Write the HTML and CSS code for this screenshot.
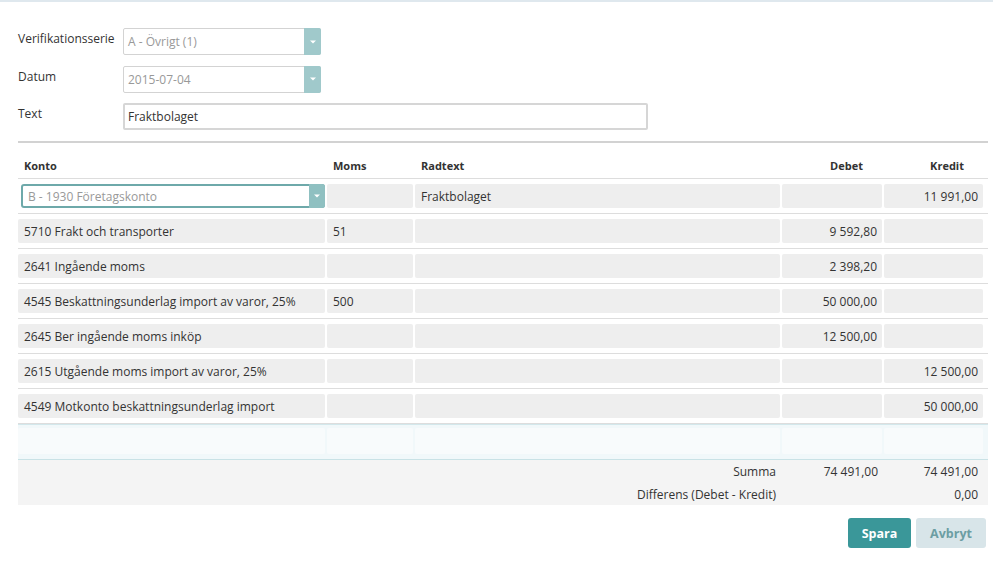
FILE: index.html
```html
<!DOCTYPE html>
<html lang="sv">
<head>
<meta charset="utf-8">
<title>Verifikation</title>
<link rel="stylesheet" href="styles.css">
</head>
<body>
<div class="topline"></div>
<div class="page">
  <div class="form">
    <div class="frow">
      <label class="flabel">Verifikationsserie</label>
      <div class="select"><span class="sval">A - Övrigt (1)</span><span class="sbtn"><svg width="6" height="4" viewBox="0 0 6 4"><path d="M0 0.5 L6 0.5 L3 3.5 Z" fill="#fff"/></svg></span></div>
    </div>
    <div class="frow">
      <label class="flabel">Datum</label>
      <div class="select"><span class="sval">2015-07-04</span><span class="sbtn"><svg width="6" height="4" viewBox="0 0 6 4"><path d="M0 0.5 L6 0.5 L3 3.5 Z" fill="#fff"/></svg></span></div>
    </div>
    <div class="frow">
      <label class="flabel">Text</label>
      <div class="tinput">Fraktbolaget</div>
    </div>
  </div>
  <div class="rule"></div>

  <div class="table">
    <div class="thead">
      <div class="th">Konto</div>
      <div class="th">Moms</div>
      <div class="th">Radtext</div>
      <div class="th num">Debet</div>
      <div class="th num">Kredit</div>
    </div>
    <div class="tr">
      <div class="acct"><span class="aval">B - 1930 Företagskonto</span><span class="abtn"><svg width="6" height="4" viewBox="0 0 6 4"><path d="M0 0.5 L6 0.5 L3 3.5 Z" fill="#fff"/></svg></span></div>
      <div class="td"></div>
      <div class="td">Fraktbolaget</div>
      <div class="td num"></div>
      <div class="td num">11 991,00</div>
    </div>
    <div class="tr">
      <div class="td">5710 Frakt och transporter</div>
      <div class="td">51</div>
      <div class="td"></div>
      <div class="td num">9 592,80</div>
      <div class="td num"></div>
    </div>
    <div class="tr">
      <div class="td">2641 Ingående moms</div>
      <div class="td"></div>
      <div class="td"></div>
      <div class="td num">2 398,20</div>
      <div class="td num"></div>
    </div>
    <div class="tr">
      <div class="td">4545 Beskattningsunderlag import av varor, 25%</div>
      <div class="td">500</div>
      <div class="td"></div>
      <div class="td num">50 000,00</div>
      <div class="td num"></div>
    </div>
    <div class="tr">
      <div class="td">2645 Ber ingående moms inköp</div>
      <div class="td"></div>
      <div class="td"></div>
      <div class="td num">12 500,00</div>
      <div class="td num"></div>
    </div>
    <div class="tr">
      <div class="td">2615 Utgående moms import av varor, 25%</div>
      <div class="td"></div>
      <div class="td"></div>
      <div class="td num"></div>
      <div class="td num">12 500,00</div>
    </div>
    <div class="tr">
      <div class="td">4549 Motkonto beskattningsunderlag import</div>
      <div class="td"></div>
      <div class="td"></div>
      <div class="td num"></div>
      <div class="td num">50 000,00</div>
    </div>
    <div class="tr empty">
      <div class="td"></div>
      <div class="td"></div>
      <div class="td"></div>
      <div class="td"></div>
      <div class="td"></div>
    </div>
    <div class="summary">
      <div class="srow">
        <div class="slabel">Summa</div>
        <div class="sv1">74 491,00</div>
        <div class="sv2">74 491,00</div>
      </div>
      <div class="srow">
        <div class="slabel">Differens (Debet - Kredit)</div>
        <div class="sv1"></div>
        <div class="sv2">0,00</div>
      </div>
    </div>
  </div>

  <div class="actions">
    <button class="btn primary">Spara</button>
    <button class="btn secondary">Avbryt</button>
  </div>
</div>
</body>
</html>
```

FILE: styles.css
```css
html, body {
  margin: 0;
  padding: 0;
  background: #ffffff;
  font-family: "Open Sans", "Liberation Sans", sans-serif;
  font-size: 12px;
  color: #333333;
}

.topline {
  height: 2px;
  background: #dfe8ee;
}

.page {
  width: 970px;
  padding-left: 18px;
}

.form {
  padding-top: 26px;
  display: flex;
  flex-direction: column;
  gap: 10.5px;
}

.frow {
  display: flex;
  align-items: flex-start;
  height: 27px;
}

.flabel {
  width: 105px;
  line-height: 16px;
  padding-top: 3px;
  color: #333;
}

.select {
  width: 198px;
  height: 27px;
  box-sizing: border-box;
  border: 1px solid #d3d3d3;
  border-radius: 2px;
  display: flex;
  align-items: center;
  background: #fff;
}

.sval {
  flex: 1;
  padding-left: 4px;
  color: #999999;
}

.sbtn {
  width: 17px;
  height: 27px;
  margin: -1px -1px -1px 0;
  background: #a0c9cb;
  border-radius: 0 2px 2px 0;
  display: flex;
  align-items: center;
  justify-content: center;
}

.tinput {
  width: 525px;
  height: 27px;
  box-sizing: border-box;
  border: 2px solid #d6d6d6;
  border-radius: 2px;
  padding-left: 3px;
  line-height: 24px;
  color: #333;
}

.rule {
  margin-top: 11px;
  height: 2px;
  background: #d2d2d2;
}

.table {
  width: 970px;
}

.thead,
.tr {
  display: grid;
  grid-template-columns: 307px 86px 365px 100px 99px;
  column-gap: 2px;
}

.thead {
  height: 35px;
  align-items: end;
  border-bottom: 1px solid #dddddd;
}

.th {
  font-size: 11px;
  font-weight: 700;
  line-height: 16px;
  padding: 0 6px 4px 6px;
  color: #333;
}

.th.num {
  text-align: right;
  padding-right: 19px;
}

.tr {
  padding: 5px 0;
  border-bottom: 1px solid #dddddd;
}

.td {
  height: 24px;
  line-height: 25px;
  background: #eeeeee;
  border-radius: 2px;
  padding: 0 6px;
  white-space: nowrap;
  overflow: hidden;
}

.td.num {
  text-align: right;
  padding-right: 5px;
}

.acct {
  height: 24px;
  margin-left: 3px;
  box-sizing: border-box;
  border: 2px solid #6ea9aa;
  border-radius: 3px;
  background: #fff;
  display: flex;
  align-items: center;
}

.aval {
  flex: 1;
  padding-left: 5px;
  padding-top: 1px;
  color: #999999;
}

.abtn {
  width: 16px;
  height: 24px;
  margin-right: -2px;
  background: #8fc0c1;
  border-radius: 0 3px 3px 0;
  display: flex;
  align-items: center;
  justify-content: center;
}

.tr.empty {
  background: #f1f8fa;
  border-top: 1px solid #d3e8ec;
  border-bottom: 1px solid #c9e2e6;
  padding: 3px 0 5px 0;
}

.tr.empty .td {
  height: 26px;
  background: #f8fbfc;
}

.summary {
  background: #f4f4f4;
  padding: 0;
}

.srow {
  display: flex;
  height: 22.5px;
  line-height: 23px;
}

.slabel {
  width: 758px;
  text-align: right;
}

.sv1 {
  width: 102px;
  text-align: right;
}

.sv2 {
  width: 100px;
  text-align: right;
}

.actions {
  margin-top: 13px;
  display: flex;
  justify-content: flex-end;
  gap: 5px;
  padding-right: 2px;
}

.btn {
  height: 30px;
  border: none;
  border-radius: 3px;
  font-family: "Open Sans", "Liberation Sans", sans-serif;
  font-size: 12.5px;
  font-weight: 700;
  padding: 0;
  cursor: pointer;
}

.btn.primary {
  width: 63px;
  background: #3a9799;
  color: #ffffff;
}

.btn.secondary {
  width: 70px;
  background: #d8e5e9;
  color: #6c9ea3;
}
```
